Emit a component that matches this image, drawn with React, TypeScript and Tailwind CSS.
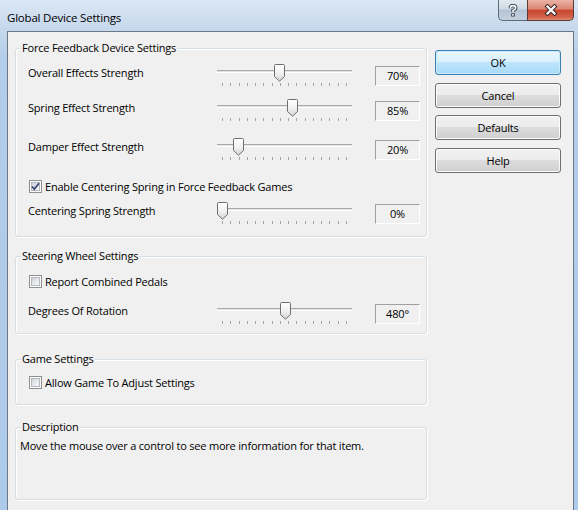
import React from "react";

function Slider({ pos }: { pos: number }) {
  return (
    <div className="relative w-[135px] h-[26px] shrink-0">
      <div className="absolute left-0 right-0 top-[6px] h-[3px] border-t border-t-[#a9a9a9] border-b border-b-white bg-[#e3e3e3]" />
      <div className="absolute left-[5px] top-[19px] w-[125px] flex justify-between">
        {Array.from({ length: 16 }).map((_, i) => (
          <span key={i} className="block w-px h-[3px] bg-[#a3a3a3]" />
        ))}
      </div>
      <svg
        className="absolute top-0"
        style={{ left: pos - 5 }}
        width="11"
        height="18"
        viewBox="0 0 11 18"
      >
        <defs>
          <linearGradient id="thumbg" x1="0" y1="0" x2="0" y2="1">
            <stop offset="0" stopColor="#ffffff" />
            <stop offset="0.5" stopColor="#f2f2f2" />
            <stop offset="1" stopColor="#d4d4d4" />
          </linearGradient>
        </defs>
        <path
          d="M1.5 0.5 H9.5 Q10.5 0.5 10.5 1.5 V12.5 L5.5 17.2 L0.5 12.5 V1.5 Q0.5 0.5 1.5 0.5 Z"
          fill="url(#thumbg)"
          stroke="#6f6f6f"
          strokeWidth="1"
        />
      </svg>
    </div>
  );
}

function ValueBox({ value }: { value: string }) {
  return (
    <span className="ml-[23px] mt-[2px] w-[45px] h-[20px] shrink-0 border border-t-[#a0a0a0] border-l-[#a0a0a0] border-r-white border-b-white flex items-center justify-center leading-[14px]">
      {value}
    </span>
  );
}

function SliderRow({
  label,
  pos,
  value,
  className,
}: {
  label: string;
  pos: number;
  value: string;
  className: string;
}) {
  return (
    <div className={`flex items-start pl-[12px] ${className}`}>
      <span className="w-[189px] shrink-0 mt-[2px] leading-[14px]">{label}</span>
      <Slider pos={pos} />
      <ValueBox value={value} />
    </div>
  );
}

function Check({ checked }: { checked?: boolean }) {
  return (
    <span className="relative w-[13px] h-[13px] shrink-0 border border-[#8e8f8f] bg-white p-px flex">
      <span className="flex-1 border border-[#b4b8be] bg-[linear-gradient(135deg,#cdd1d7_0%,#e6e8eb_50%,#f7f7f7_100%)]" />
      {checked && (
        <svg className="absolute left-0 top-0" width="11" height="11" viewBox="0 0 11 11">
          <path
            d="M2 5.5 L4.3 8 L9 2.2"
            fill="none"
            stroke="#3a4a72"
            strokeWidth="1.8"
            strokeLinejoin="miter"
          />
        </svg>
      )}
    </span>
  );
}

function CheckRow({
  label,
  checked,
  className,
}: {
  label: string;
  checked?: boolean;
  className: string;
}) {
  return (
    <div className={`flex items-center h-[13px] pl-[13px] ${className}`}>
      <Check checked={checked} />
      <span className="ml-[3px] leading-[14px]">{label}</span>
    </div>
  );
}

function Group({
  title,
  className,
  children,
}: {
  title: string;
  className: string;
  children: React.ReactNode;
}) {
  return (
    <fieldset
      className={`w-[412px] border border-[#d5dfe5] rounded-[3px] shadow-[1px_1px_0_#ffffff,inset_1px_1px_0_#ffffff] ${className}`}
    >
      <legend className="ml-[5px] px-px leading-[14px] bg-[#f0f0f0]">{title}</legend>
      {children}
    </fieldset>
  );
}

function Btn({
  label,
  primary,
  className,
}: {
  label: string;
  primary?: boolean;
  className: string;
}) {
  const base =
    "h-[25px] w-full rounded-[3px] border flex items-center justify-center leading-[14px] text-black";
  const look = primary
    ? "border-[#3c7fb1] bg-[linear-gradient(to_bottom,#eaf6fd_0%,#d9f0fc_49%,#bee6fd_50%,#a7d9f5_100%)] shadow-[inset_0_0_0_1px_#c8ecfb]"
    : "border-[#707070] bg-[linear-gradient(to_bottom,#f2f2f2_0%,#ebebeb_49%,#dddddd_50%,#cfcfcf_100%)] shadow-[inset_0_0_0_1px_#fbfbfb]";
  return <div className={`${base} ${look} ${className}`}>{label}</div>;
}

export default function App() {
  return (
    <div className="w-[578px] h-[510px] overflow-hidden flex flex-col pl-[7px] pr-[4px] bg-[linear-gradient(to_bottom,#dbe7f4_0px,#c7d9ed_28px,#b3cdea_60px,#aecaea_100%)] font-['Open_Sans',sans-serif] text-[11px] tracking-[-0.2px] text-black">
      {/* title bar */}
      <div className="h-[31px] flex items-start shrink-0">
        <span className="pt-[11px] leading-[14px] text-[11.5px] text-black">Global Device Settings</span>
        <div className="ml-auto flex">
          <div className="w-[29px] h-[21px] rounded-bl-[5px] border border-t-0 border-r-0 border-[#5e6b7a] bg-[linear-gradient(to_bottom,#e3e9f0_0%,#cfd9e4_45%,#b5c4d4_50%,#c3d0de_100%)] flex items-center justify-center">
            <svg width="10" height="13" viewBox="0 0 10 13">
              <path
                d="M2.3 4.2 Q2.3 1.6 5 1.6 Q7.7 1.6 7.7 3.9 Q7.7 5.4 5 6.6 V8"
                fill="none"
                stroke="#2e3a48"
                strokeWidth="3.4"
              />
              <rect x="3.2" y="9.3" width="3.6" height="3.2" fill="#2e3a48" />
              <path
                d="M2.3 4.2 Q2.3 1.6 5 1.6 Q7.7 1.6 7.7 3.9 Q7.7 5.4 5 6.6 V8"
                fill="none"
                stroke="#ffffff"
                strokeWidth="1.6"
              />
              <rect x="4.1" y="10.1" width="1.8" height="1.6" fill="#ffffff" />
            </svg>
          </div>
          <div className="w-[47px] h-[21px] rounded-br-[5px] border border-t-0 border-[#5e3a34] bg-[linear-gradient(to_bottom,#eab2a6_0%,#dc8471_45%,#c8452e_52%,#d2624a_85%,#e08e6e_100%)] flex items-center justify-center">
            <svg width="14" height="12" viewBox="0 0 14 12">
              <path d="M3.5 2.5 L10.5 9.5 M10.5 2.5 L3.5 9.5" stroke="#3a2a28" strokeWidth="4.2" strokeLinecap="square" />
              <path d="M3.5 2.5 L10.5 9.5 M10.5 2.5 L3.5 9.5" stroke="#ffffff" strokeWidth="2.2" strokeLinecap="square" />
            </svg>
          </div>
        </div>
      </div>

      {/* client area */}
      <div className="flex-1 flex border border-b-0 border-[#6b7785] bg-[#f0f0f0]">
        <div className="pl-[7px] flex flex-col">
          <Group title="Force Feedback Device Settings" className="mt-[9px] pb-[8px]">
            <SliderRow label="Overall Effects Strength" pos={62} value="70%" className="mt-[9px]" />
            <SliderRow label="Spring Effect Strength" pos={75} value="85%" className="mt-[9px]" />
            <SliderRow label="Damper Effect Strength" pos={21} value="20%" className="mt-[13px]" />
            <CheckRow label="Enable Centering Spring in Force Feedback Games" checked className="mt-[16px]" />
            <SliderRow label="Centering Spring Strength" pos={5} value="0%" className="mt-[9px]" />
          </Group>
          <Group title="Steering Wheel Settings" className="mt-[12px] pb-[5px]">
            <CheckRow label="Report Combined Pedals" className="mt-[12px]" />
            <SliderRow label="Degrees Of Rotation" pos={68} value="480°" className="mt-[14px]" />
          </Group>
          <Group title="Game Settings" className="mt-[18px] pb-[15px]">
            <CheckRow label="Allow Game To Adjust Settings" className="mt-[10px]" />
          </Group>
          <Group title="Description" className="mt-[15px] h-[80px]">
            <p className="mt-[5px] pl-[4px] leading-[14px]">
              Move the mouse over a control to see more information for that item.
            </p>
          </Group>
        </div>
        <div className="ml-[8px] w-[126px] mt-[18px] flex flex-col">
          <Btn label="OK" primary className="" />
          <Btn label="Cancel" className="mt-[8px]" />
          <Btn label="Defaults" className="mt-[7px]" />
          <Btn label="Help" className="mt-[8px]" />
        </div>
      </div>
    </div>
  );
}
